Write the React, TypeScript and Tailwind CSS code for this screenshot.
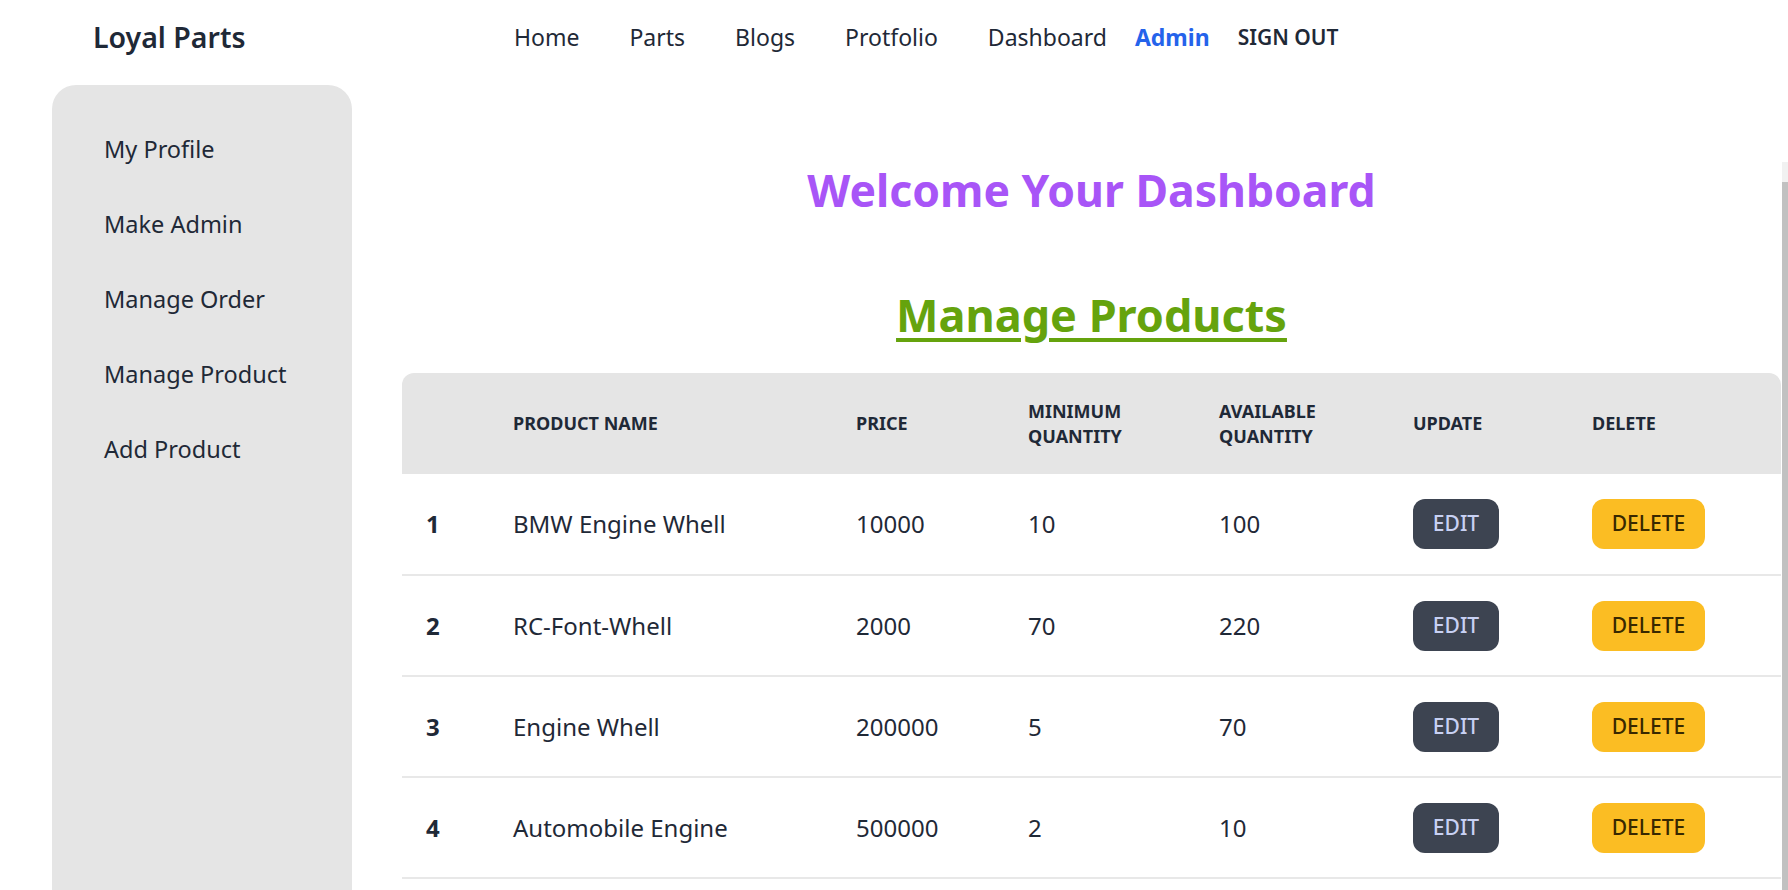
import React from "react";

const rows = [
  { n: 1, name: "BMW Engine Whell", price: "10000", min: "10", avail: "100" },
  { n: 2, name: "RC-Font-Whell", price: "2000", min: "70", avail: "220" },
  { n: 3, name: "Engine Whell", price: "200000", min: "5", avail: "70" },
  { n: 4, name: "Automobile Engine", price: "500000", min: "2", avail: "10" },
];

export default function App() {
  return (
    <div className="relative w-full h-[890px] overflow-hidden bg-white text-[#1f2937] font-['Noto_Sans','Open_Sans',sans-serif]">
      {/* Navbar */}
      <div className="flex items-center h-[75px]">
        <div className="w-[489px] pl-[93px] text-[28.5px] font-semibold leading-none">Loyal Parts</div>
        <nav className="flex items-center text-[23px] leading-none">
          <a className="px-[25px]">Home</a>
          <a className="px-[25px]">Parts</a>
          <a className="px-[25px]">Blogs</a>
          <a className="px-[25px]">Protfolio</a>
          <a className="px-[25px]">Dashboard</a>
          <a className="ml-[3px] font-bold text-[#2563eb]">Admin</a>
          <a className="ml-[28px] text-[21px] font-semibold uppercase">Sign Out</a>
        </nav>
      </div>

      {/* Body */}
      <div className="flex pt-[10px]">
        <aside className="ml-[52px] w-[300px] h-[820px] shrink-0 rounded-t-[24px] bg-[#e5e5e5] pt-[27px]">
          {["My Profile", "Make Admin", "Manage Order", "Manage Product", "Add Product"].map((t) => (
            <div key={t} className="h-[75px] flex items-center pl-[52px] text-[23.5px]">
              {t}
            </div>
          ))}
        </aside>

        <main className="ml-[50px] mr-[7px] flex-1 flex flex-col">
          <h1 className="mt-[78px] text-center text-[44.5px] leading-[54px] font-bold text-[#a855f7]">
            Welcome Your Dashboard
          </h1>
          <h2 className="mt-[71px] text-center text-[45px] leading-[54px] font-bold text-[#65a30d] underline decoration-[4px] underline-offset-[6px]">
            Manage Products
          </h2>
          <table className="mt-[31px] w-full border-collapse text-left">
            <thead>
              <tr className="text-[18px] leading-[25px] font-bold uppercase">
                <th className="w-[87px] h-[101px] bg-[#e5e5e5] rounded-tl-[12px] pl-[24px]"></th>
                <th className="w-[343px] bg-[#e5e5e5] pl-[24px]">Product Name</th>
                <th className="w-[172px] bg-[#e5e5e5] pl-[24px]">Price</th>
                <th className="w-[191px] bg-[#e5e5e5] pl-[24px]">Minimum<br />Quantity</th>
                <th className="w-[194px] bg-[#e5e5e5] pl-[24px]">Available<br />Quantity</th>
                <th className="w-[179px] bg-[#e5e5e5] pl-[24px]">Update</th>
                <th className="bg-[#e5e5e5] rounded-tr-[12px] pl-[24px]">Delete</th>
              </tr>
            </thead>
            <tbody className="text-[24px]">
              {rows.map((r) => (
                <tr key={r.n} className="border-b-2 border-[#e8e8e8]">
                  <td className="h-[101px] pl-[24px] font-bold">{r.n}</td>
                  <td className="pl-[24px]">{r.name}</td>
                  <td className="pl-[24px]">{r.price}</td>
                  <td className="pl-[24px]">{r.min}</td>
                  <td className="pl-[24px]">{r.avail}</td>
                  <td className="pl-[24px]">
                    <button className="w-[86px] h-[50px] rounded-[12px] bg-[#3d4451] text-[#c8d1f3] text-[21px] font-medium">
                      EDIT
                    </button>
                  </td>
                  <td className="pl-[24px]">
                    <button className="w-[113px] h-[50px] rounded-[12px] bg-[#fbbd23] text-[#382800] text-[21px] font-medium">
                      DELETE
                    </button>
                  </td>
                </tr>
              ))}
            </tbody>
          </table>
        </main>
      </div>

      {/* Scrollbar */}
      <div className="absolute right-0 top-[162px] bottom-0 w-[6px] flex flex-col">
        <div className="h-[20px] bg-[#f1f1f1]"></div>
        <div className="flex-1 bg-[#c1c1c1]"></div>
      </div>
    </div>
  );
}
